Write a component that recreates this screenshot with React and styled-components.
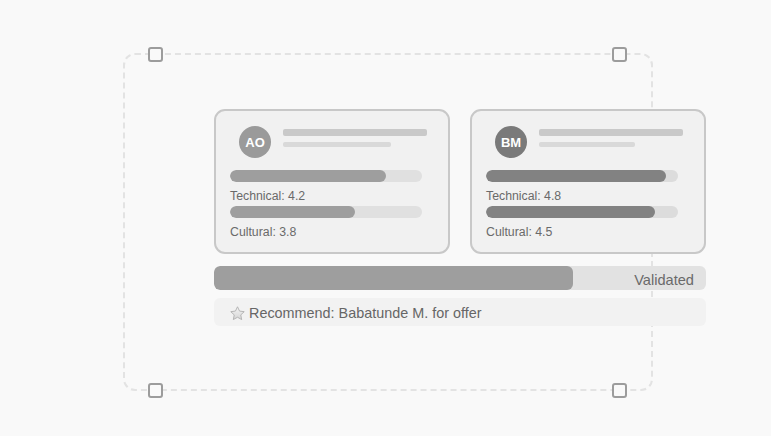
import styled, { createGlobalStyle } from "styled-components";

const Global = createGlobalStyle`
  html, body {
    margin: 0;
    padding: 0;
    background: #f9f9f9;
    font-family: "Liberation Sans", Arial, sans-serif;
  }
`;

const Stage = styled.div`
  position: relative;
  width: 771px;
  height: 436px;
  padding: 109px 0 0 214px;
  box-sizing: border-box;
`;

const Selection = styled.div`
  position: absolute;
  left: 123px;
  top: 53px;
  width: 530px;
  height: 338px;
  box-sizing: border-box;
  border: 2px dashed #e3e3e3;
  border-radius: 12px;
`;

const Handle = styled.div`
  position: absolute;
  width: 15px;
  height: 15px;
  box-sizing: border-box;
  border: 2px solid #9c9c9c;
  border-radius: 3px;
  background: #f9f9f9;
  left: ${p => (p.$right ? "487px" : "23px")};
  top: ${p => (p.$bottom ? "328px" : "-8px")};
`;

const Content = styled.div`
  position: relative;
  width: 492px;
  display: flex;
  flex-direction: column;
`;

const Cards = styled.div`
  display: grid;
  grid-template-columns: 236px 236px;
  gap: 20px;
`;

const Card = styled.div`
  height: 145px;
  box-sizing: border-box;
  padding: 15px 14px 0;
  background: #f1f1f1;
  border: 2px solid #c8c8c8;
  border-radius: 11px;
`;

const Header = styled.div`
  display: flex;
  align-items: center;
  gap: 12px;
  margin: 0 9px;
  height: 32px;
`;

const Avatar = styled.div`
  width: 32px;
  height: 32px;
  border-radius: 50%;
  background: ${p => p.$bg};
  color: #fff;
  font-weight: bold;
  font-size: 13px;
  display: flex;
  align-items: center;
  justify-content: center;
  flex: none;
`;

const Lines = styled.div`
  display: flex;
  flex-direction: column;
  gap: 6px;
  flex: 1;
  margin-top: -9px;
`;

const Line = styled.div`
  height: ${p => p.$h}px;
  width: ${p => p.$w}px;
  background: ${p => p.$c};
  border-radius: 2px;
`;

const Track = styled.div`
  width: 192px;
  height: 12px;
  border-radius: 6px;
  background: ${p => p.$track};
  margin-top: ${p => p.$mt || 0}px;
  overflow: hidden;
`;

const Fill = styled.div`
  height: 100%;
  border-radius: 6px;
  background: ${p => p.$c};
`;

const Label = styled.div`
  font-size: 12.3px;
  line-height: 17px;
  padding: 6px 0 1px;
  color: #6a6a6a;
`;

const Progress = styled.div`
  margin-top: 12px;
  height: 24px;
  border-radius: 6px;
  background: #e2e2e2;
  position: relative;
  display: flex;
  align-items: center;
  justify-content: flex-end;
  padding-right: 12px;
  overflow: hidden;
`;

const ProgressFill = styled.div`
  position: absolute;
  left: 0;
  top: 0;
  bottom: 0;
  border-radius: 6px;
  background: #9e9e9e;
`;

const ProgressText = styled.span`
  position: relative;
  font-size: 14.6px;
  color: #6a6a6a;
  margin-top: 4px;
`;

const Recommend = styled.div`
  margin-top: 8px;
  height: 28px;
  border-radius: 6px;
  background: #f2f2f2;
  display: flex;
  align-items: center;
  gap: 3px;
  padding: 2px 0 0 15px;
  box-sizing: border-box;
  font-size: 14.4px;
  color: #666;
`;

function Star() {
  return (
    <svg width="17" height="17" viewBox="0 0 24 24">
      <defs>
        <linearGradient id="sg" x1="0" y1="0" x2="0" y2="1">
          <stop offset="0" stopColor="#f6f6f6" />
          <stop offset="1" stopColor="#d4d4d4" />
        </linearGradient>
      </defs>
      <path
        d="M12 2.5l2.9 6.1 6.6.8-4.9 4.6 1.3 6.6L12 17.3l-5.9 3.3 1.3-6.6-4.9-4.6 6.6-.8z"
        fill="url(#sg)"
        stroke="#b0b0b0"
        strokeWidth="1.3"
        strokeLinejoin="round"
      />
    </svg>
  );
}

const candidates = [
  {
    initials: "AO",
    avatar: "#9a9a9a",
    bar: "#9e9e9e",
    track: "#e0e0e0",
    name: 144,
    sub: 108,
    scores: [["Technical", "4.2", 81], ["Cultural", "3.8", 65]],
  },
  {
    initials: "BM",
    avatar: "#7a7a7a",
    bar: "#828282",
    track: "#dcdcdc",
    name: 144,
    sub: 96,
    scores: [["Technical", "4.8", 94], ["Cultural", "4.5", 88]],
  },
];

export default function App() {
  return (
    <>
      <Global />
      <Stage>
        <Selection>
          <Handle />
          <Handle $right />
          <Handle $bottom />
          <Handle $right $bottom />
        </Selection>
        <Content>
          <Cards>
            {candidates.map(c => (
              <Card key={c.initials}>
                <Header>
                  <Avatar $bg={c.avatar}>{c.initials}</Avatar>
                  <Lines>
                    <Line $h={7} $w={c.name} $c="#c9c9c9" />
                    <Line $h={5} $w={c.sub} $c="#d9d9d9" />
                  </Lines>
                </Header>
                {c.scores.map(([name, val, pct], i) => (
                  <div key={name}>
                    <Track $track={c.track} $mt={i === 0 ? 12 : 0}>
                      <Fill $c={c.bar} style={{ width: pct + "%" }} />
                    </Track>
                    <Label>{name}: {val}</Label>
                  </div>
                ))}
              </Card>
            ))}
          </Cards>
          <Progress>
            <ProgressFill style={{ width: "73%" }} />
            <ProgressText>Validated</ProgressText>
          </Progress>
          <Recommend>
            <Star />
            Recommend: Babatunde M. for offer
          </Recommend>
        </Content>
      </Stage>
    </>
  );
}
